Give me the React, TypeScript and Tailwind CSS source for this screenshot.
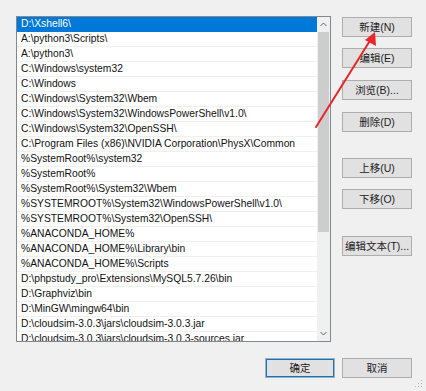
import { ReactNode } from 'react';

const paths = [
  'D:\\Xshell6\\',
  'A:\\python3\\Scripts\\',
  'A:\\python3\\',
  'C:\\Windows\\system32',
  'C:\\Windows',
  'C:\\Windows\\System32\\Wbem',
  'C:\\Windows\\System32\\WindowsPowerShell\\v1.0\\',
  'C:\\Windows\\System32\\OpenSSH\\',
  'C:\\Program Files (x86)\\NVIDIA Corporation\\PhysX\\Common',
  '%SystemRoot%\\system32',
  '%SystemRoot%',
  '%SystemRoot%\\System32\\Wbem',
  '%SYSTEMROOT%\\System32\\WindowsPowerShell\\v1.0\\',
  '%SYSTEMROOT%\\System32\\OpenSSH\\',
  '%ANACONDA_HOME%',
  '%ANACONDA_HOME%\\Library\\bin',
  '%ANACONDA_HOME%\\Scripts',
  'D:\\phpstudy_pro\\Extensions\\MySQL5.7.26\\bin',
  'D:\\Graphviz\\bin',
  'D:\\MinGW\\mingw64\\bin',
  'D:\\cloudsim-3.0.3\\jars\\cloudsim-3.0.3.jar',
  'D:\\cloudsim-3.0.3\\jars\\cloudsim-3.0.3-sources.jar',
];

function Btn({ children, className = '' }: { children: ReactNode; className?: string }) {
  return (
    <button
      className={`w-[70px] h-[20px] bg-[#e1e1e1] border border-[#adadad] text-[10.5px] leading-none text-[#222] whitespace-nowrap flex items-center justify-center ${className}`}
    >
      {children}
    </button>
  );
}

export default function App() {
  return (
    <div
      className="relative w-[426px] h-[391px] bg-[#f0f0f0] overflow-hidden"
      style={{ fontFamily: '"Liberation Sans", "Noto Sans CJK SC", sans-serif' }}
    >
      <div className="flex pt-4 pl-4 gap-[11px]">
        {/* Path list */}
        <div className="w-[315px] h-[326px] border border-[#828790] bg-white flex overflow-hidden">
          <div className="w-[300px] flex flex-col overflow-hidden">
            {paths.map((p, i) => (
              <div
                key={i}
                className={`h-[15px] shrink-0 pl-1 text-[10.3px] leading-[14px] whitespace-nowrap overflow-hidden border-b ${
                  i === 0 ? 'bg-[#0078d7] text-white border-[#0078d7]' : 'text-[#111] border-[#f0f0f0]'
                }`}
              >
                {p}
              </div>
            ))}
          </div>
          {/* Scrollbar */}
          <div className="w-[13px] bg-[#f0f0f0] flex flex-col">
            <div className="h-[15px] flex items-center justify-center">
              <svg width="7" height="5" viewBox="0 0 7 5">
                <path d="M0.5 4 L3.5 1 L6.5 4" fill="none" stroke="#606060" strokeWidth="1" />
              </svg>
            </div>
            <div className="h-[200px] bg-[#cdcdcd] mx-[1px]" />
            <div className="flex-1" />
            <div className="h-[15px] flex items-center justify-center">
              <svg width="7" height="5" viewBox="0 0 7 5">
                <path d="M0.5 1 L3.5 4 L6.5 1" fill="none" stroke="#606060" strokeWidth="1" />
              </svg>
            </div>
          </div>
        </div>

        {/* Side buttons */}
        <div className="flex flex-col pt-[1px]">
          <Btn>新建(N)</Btn>
          <Btn className="mt-[11px]">编辑(E)</Btn>
          <Btn className="mt-[12px]">浏览(B)...</Btn>
          <Btn className="mt-[12px]">删除(D)</Btn>
          <Btn className="mt-[26px]">上移(U)</Btn>
          <Btn className="mt-[11px]">下移(O)</Btn>
          <Btn className="mt-[27px]">编辑文本(T)...</Btn>
        </div>
      </div>

      {/* Footer buttons */}
      <div className="flex justify-end gap-[7px] pr-[14px] mt-[16px]">
        <Btn className="border-[#0078d7] ring-1 ring-inset ring-[#0078d7]">确定</Btn>
        <Btn>取消</Btn>
      </div>

      {/* Resize grip */}
      <svg className="absolute right-[3px] bottom-[3px]" width="8" height="8" viewBox="0 0 8 8">
        <rect x="6" y="0" width="1" height="1" fill="#b5b5b5" />
        <rect x="3" y="3" width="1" height="1" fill="#b5b5b5" />
        <rect x="6" y="3" width="1" height="1" fill="#b5b5b5" />
        <rect x="0" y="6" width="1" height="1" fill="#b5b5b5" />
        <rect x="3" y="6" width="1" height="1" fill="#b5b5b5" />
        <rect x="6" y="6" width="1" height="1" fill="#b5b5b5" />
      </svg>

      {/* Red annotation arrow */}
      <svg className="absolute left-0 top-0 pointer-events-none" width="426" height="391">
        <line x1="316" y1="127" x2="371" y2="39" stroke="#e8262b" strokeWidth="2" strokeLinecap="round" />
        <polygon points="375,32 376,46 365,40" fill="#e8262b" />
      </svg>
    </div>
  );
}
